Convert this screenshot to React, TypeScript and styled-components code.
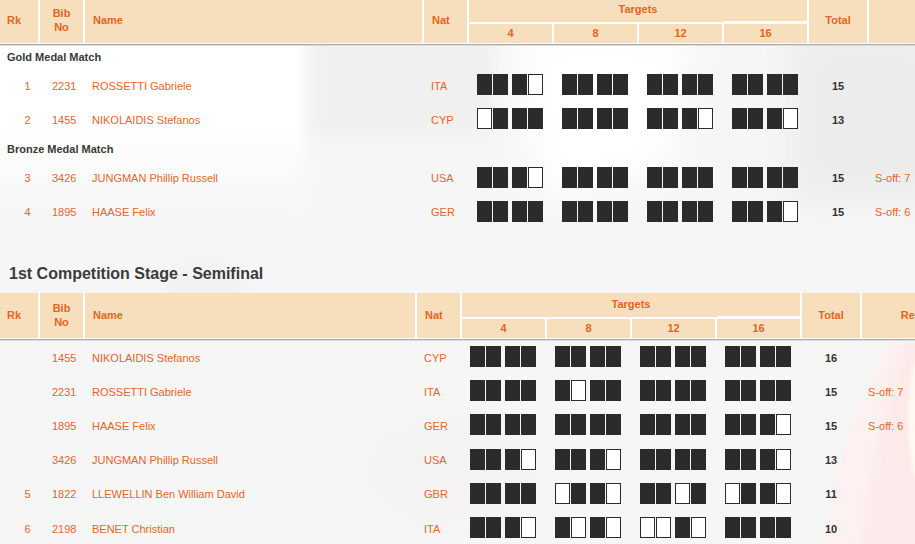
import React from "react";
import styled, { createGlobalStyle } from "styled-components";

const Global = createGlobalStyle`
  html, body { margin: 0; padding: 0; background: #f6f6f6; }
  body { font-family: "Liberation Sans", Arial, sans-serif; font-size: 11px; }
`;

const Page = styled.div`
  position: relative;
  width: 915px;
  height: 544px;
  overflow: hidden;
`;

const Backdrop = styled.svg`
  position: absolute;
  inset: 0;
  width: 915px;
  height: 544px;
`;

const Content = styled.div`
  position: relative;
  margin-top: -2px;
  display: flex;
  flex-direction: column;
`;

const Heading = styled.h2`
  margin: 33px 0 7px;
  padding: 0 0 0 9px;
  height: 24px;
  font-size: 16px;
  line-height: 24px;
  font-weight: bold;
  color: #3b3b3b;
`;

const Table = styled.table`
  border-collapse: separate;
  border-spacing: 0;
  table-layout: fixed;
  width: 988px;
`;

const Col = styled.col<{ $w?: number }>`
  width: ${(p) => (p.$w ? `${p.$w}px` : "auto")};
`;

const HeadCell = styled.th<{ $pad?: number }>`
  position: relative;
  box-sizing: border-box;
  padding: 0 0 1px ${(p) => p.$pad ?? 0}px;
  background: #f7dfbe;
  border-right: 2px solid #ffffff;
  color: #e3651f;
  font-size: 11px;
  line-height: 14px;
  font-weight: bold;
  text-align: ${(p) => (p.$pad ? "left" : "center")};
  vertical-align: middle;
`;

const GroupHead = styled(HeadCell)`
  height: 26px;
  padding-bottom: 3px;
  border-bottom: 2px solid #ffffff;
`;

const SubHead = styled(HeadCell)<{ $notch?: boolean }>`
  height: 19px;
  &::before {
    content: "";
    display: ${(p) => (p.$notch ? "block" : "none")};
    position: absolute;
    left: 0;
    right: -2px;
    top: -3px;
    height: 1px;
    background: #ffffff;
  }
`;

const RuleCell = styled.td`
  box-sizing: border-box;
  padding: 0;
  height: 2px;
  font-size: 0;
  line-height: 0;
  border-top: 1px solid #ffffff;
  background: #a9a9a9;
  box-shadow: 0 1px 0 #dcdcdc;
`;

const GroupRow = styled.tr<{ $h: number }>`
  height: ${(p) => p.$h}px;
`;

const GroupCell = styled.td`
  padding: 0 0 0 7px;
  font-weight: bold;
  color: #383838;
  font-size: 11px;
  vertical-align: middle;
`;

const Row = styled.tr<{ $tall?: boolean }>`
  height: ${(p) => (p.$tall ? 35 : 34)}px;
`;

const Cell = styled.td<{ $pad?: number; $raise?: boolean }>`
  box-sizing: border-box;
  padding: ${(p) => (p.$raise ? "0 0 1px" : "1px 0 0")} ${(p) => p.$pad ?? 0}px;
  padding-right: 0;
  color: #e4652a;
  font-size: 11px;
  vertical-align: middle;
  white-space: nowrap;
`;

const RankCell = styled(Cell)`
  padding-left: 15px;
  text-align: center;
`;

const TotalCell = styled(Cell)`
  padding-right: 2px;
  color: #333333;
  font-weight: bold;
  text-align: center;
`;

const Shots = styled.td`
  padding: 0 0 2px 8px;
  vertical-align: middle;
`;

const ShotWrap = styled.div`
  display: flex;
  gap: 4px;
  width: 66px;
`;

const ShotPair = styled.div`
  display: flex;
  gap: 1px;
`;

const Shot = styled.span<{ $hit: boolean }>`
  box-sizing: border-box;
  display: block;
  width: 15px;
  height: 21px;
  border: 1px solid #2b2b2b;
  background: ${(p) => (p.$hit ? "#2b2b2b" : "#ffffff")};
`;

type Athlete = {
  rk: string;
  bib: string;
  name: string;
  nat: string;
  shots: string[];
  total: number;
  note?: string;
  tall?: boolean;
  raise?: boolean;
};

const FULL = "1111";

const goldRows: Athlete[] = [
  { rk: "1", bib: "2231", name: "ROSSETTI Gabriele", nat: "ITA", shots: ["1110", FULL, FULL, FULL], total: 15 },
  { rk: "2", bib: "1455", name: "NIKOLAIDIS Stefanos", nat: "CYP", shots: ["0111", FULL, "1110", "1110"], total: 13 },
];

const bronzeRows: Athlete[] = [
  { rk: "3", bib: "3426", name: "JUNGMAN Phillip Russell", nat: "USA", shots: ["1110", FULL, FULL, FULL], total: 15, note: "S-off: 7", raise: true },
  { rk: "4", bib: "1895", name: "HAASE Felix", nat: "GER", shots: [FULL, FULL, FULL, "1110"], total: 15, note: "S-off: 6", raise: true },
];

const semiRows: Athlete[] = [
  { rk: "", bib: "1455", name: "NIKOLAIDIS Stefanos", nat: "CYP", shots: [FULL, FULL, FULL, FULL], total: 16 },
  { rk: "", bib: "2231", name: "ROSSETTI Gabriele", nat: "ITA", shots: [FULL, "1011", FULL, FULL], total: 15, note: "S-off: 7" },
  { rk: "", bib: "1895", name: "HAASE Felix", nat: "GER", shots: [FULL, FULL, FULL, "1110"], total: 15, note: "S-off: 6", tall: true },
  { rk: "", bib: "3426", name: "JUNGMAN Phillip Russell", nat: "USA", shots: ["1110", "1110", FULL, "1110"], total: 13, raise: true },
  { rk: "5", bib: "1822", name: "LLEWELLIN Ben William David", nat: "GBR", shots: [FULL, "0110", "1101", "0110"], total: 11, raise: true },
  { rk: "6", bib: "2198", name: "BENET Christian", nat: "ITA", shots: ["1110", "1010", "0010", FULL], total: 10 },
];

const Targets = ({ code }: { code: string }) => (
  <Shots>
    <ShotWrap>
      <ShotPair>
        <Shot $hit={code[0] === "1"} />
        <Shot $hit={code[1] === "1"} />
      </ShotPair>
      <ShotPair>
        <Shot $hit={code[2] === "1"} />
        <Shot $hit={code[3] === "1"} />
      </ShotPair>
    </ShotWrap>
  </Shots>
);

const AthleteRow = ({ a }: { a: Athlete }) => (
  <Row $tall={a.tall}>
    <RankCell $raise={a.raise}>{a.rk}</RankCell>
    <Cell $pad={12} $raise={a.raise}>{a.bib}</Cell>
    <Cell $pad={7} $raise={a.raise}>{a.name}</Cell>
    <Cell $pad={7} $raise={a.raise}>{a.nat}</Cell>
    {a.shots.map((s, i) => (
      <Targets key={i} code={s} />
    ))}
    <TotalCell $raise={a.raise}>{a.total}</TotalCell>
    <Cell $pad={6} $raise={a.raise}>{a.note}</Cell>
  </Row>
);

const Head = ({ name, note }: { name: number; note: string }) => (
  <>
    <colgroup>
      <Col $w={40} />
      <Col $w={45} />
      <Col $w={name} />
      <Col $w={45} />
      <Col $w={85} />
      <Col $w={85} />
      <Col $w={85} />
      <Col $w={85} />
      <Col $w={60} />
      <Col />
    </colgroup>
    <thead>
      <tr>
        <HeadCell rowSpan={2} $pad={7}>Rk</HeadCell>
        <HeadCell rowSpan={2}>Bib<br />No</HeadCell>
        <HeadCell rowSpan={2} $pad={8}>Name</HeadCell>
        <HeadCell rowSpan={2} $pad={8}>Nat</HeadCell>
        <GroupHead colSpan={4}>Targets</GroupHead>
        <HeadCell rowSpan={2}>Total</HeadCell>
        <HeadCell rowSpan={2}>{note}</HeadCell>
      </tr>
      <tr>
        <SubHead>4</SubHead>
        <SubHead>8</SubHead>
        <SubHead>12</SubHead>
        <SubHead $notch>16</SubHead>
      </tr>
    </thead>
  </>
);

const Rule = () => (
  <tr>
    <RuleCell colSpan={10} />
  </tr>
);

const Wash = () => (
  <Backdrop viewBox="0 0 915 544" aria-hidden="true">
    <defs>
      <linearGradient id="fade" x1="0" y1="30" x2="0" y2="215" gradientUnits="userSpaceOnUse">
        <stop offset="0" stopColor="#ffffff" />
        <stop offset="0.52" stopColor="#ffffff" />
        <stop offset="1" stopColor="#f6f6f6" />
      </linearGradient>
      <filter id="wide" x="-30%" y="-30%" width="160%" height="160%">
        <feGaussianBlur stdDeviation="18" />
      </filter>
      <filter id="mid" x="-30%" y="-30%" width="160%" height="160%">
        <feGaussianBlur stdDeviation="7" />
      </filter>
      <filter id="edge" x="-30%" y="-30%" width="160%" height="160%">
        <feGaussianBlur stdDeviation="1.5" />
      </filter>
    </defs>
    <rect width="915" height="544" fill="#f6f6f6" />
    <rect x="-40" y="30" width="345" height="185" fill="url(#fade)" filter="url(#mid)" />
    <rect x="310" y="35" width="185" height="98" fill="#f0f0f0" filter="url(#mid)" />
    <path d="M512 30 L690 30 L670 170 L540 200 Z" fill="#ffffff" filter="url(#wide)" />
    <rect x="790" y="30" width="160" height="170" fill="#ececec" filter="url(#wide)" />
    <ellipse cx="205" cy="290" rx="40" ry="26" fill="#f2f2f2" filter="url(#mid)" />
    <ellipse cx="450" cy="470" rx="80" ry="45" fill="#f4f2f2" filter="url(#wide)" />
    <path d="M822 560 C830 490 850 420 888 342 L925 342 L925 560 Z" fill="#fdf1f1" filter="url(#edge)" />
    <path d="M862 560 C868 490 884 420 904 342 L925 342 L925 560 Z" fill="#fce9e9" filter="url(#mid)" />
    <ellipse cx="922" cy="420" rx="14" ry="70" fill="#fff8f0" filter="url(#edge)" />
  </Backdrop>
);

export default function App() {
  return (
    <Page>
      <Global />
      <Wash />
      <Content>
        <Table>
          <Head name={339} note="" />
          <tbody>
            <Rule />
            <GroupRow $h={23}><GroupCell colSpan={10}>Gold Medal Match</GroupCell></GroupRow>
            {goldRows.map((a) => <AthleteRow key={a.bib} a={a} />)}
            <GroupRow $h={25}><GroupCell colSpan={10}>Bronze Medal Match</GroupCell></GroupRow>
            {bronzeRows.map((a) => <AthleteRow key={a.bib} a={a} />)}
          </tbody>
        </Table>
        <Heading>1st Competition Stage - Semifinal</Heading>
        <Table>
          <Head name={332} note="Remarks" />
          <tbody>
            <Rule />
            {semiRows.map((a) => <AthleteRow key={a.bib} a={a} />)}
          </tbody>
        </Table>
      </Content>
    </Page>
  );
}
